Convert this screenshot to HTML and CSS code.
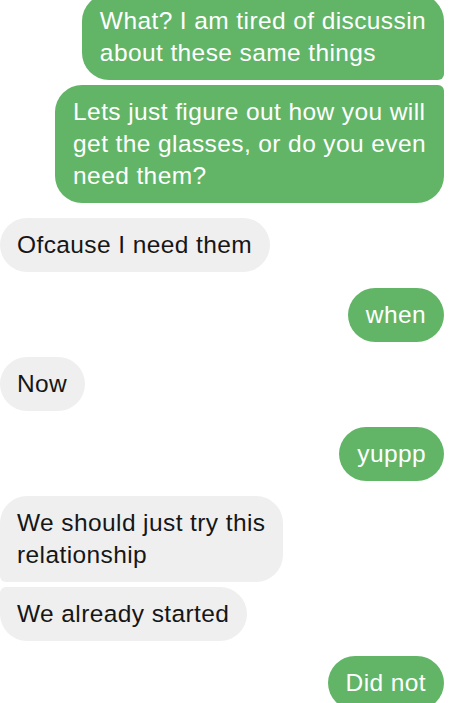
FILE: index.html
```html
<!DOCTYPE html>
<html lang="en">
<head>
  <meta charset="UTF-8" />
  <title>Messages</title>
  <link rel="stylesheet" href="styles.css">
</head>
<body>

  <div class="chat">
    <div class="group sent">
      <div class="bubble first">What? I am tired of discussin<br>about these same things</div>
      <div class="bubble last">Lets just figure out how you will<br>get the glasses, or do you even<br>need them?</div>
    </div>

    <div class="group received">
      <div class="bubble">Ofcause I need them</div>
    </div>

    <div class="group sent">
      <div class="bubble">when</div>
    </div>

    <div class="group received">
      <div class="bubble">Now</div>
    </div>

    <div class="group sent">
      <div class="bubble">yuppp</div>
    </div>

    <div class="group received">
      <div class="bubble first">We should just try this<br>relationship</div>
      <div class="bubble last">We already started</div>
    </div>

    <div class="group sent">
      <div class="bubble">Did not</div>
    </div>
  </div>

</body>
</html>
```

FILE: styles.css
```css
* {
  box-sizing: border-box;
}

body {
  margin: 0;
  background: #fff;
  font-family: 'Liberation Sans', Arial, sans-serif;
  overflow: hidden;
  height: 703px;
}

.chat {
  display: flex;
  flex-direction: column;
  gap: 15.5px;
  margin-top: -6px;
  padding-right: 30px;
}

.group {
  display: flex;
  flex-direction: column;
  gap: 4.5px;
}

.group.sent {
  align-items: flex-end;
}

.group.received {
  align-items: flex-start;
}

.bubble {
  font-size: 24.5px;
  letter-spacing: 0.4px;
  line-height: 32px;
  padding: 11px 18px;
  border-radius: 27px;
  white-space: nowrap;
}

.sent .bubble {
  background: #62b567;
  color: #fff;
}

.received .bubble {
  background: #efefef;
  color: #161616;
  padding-left: 17px;
}

.sent .bubble.first {
  border-bottom-right-radius: 6px;
}

.sent .bubble.last {
  border-top-right-radius: 6px;
}

.received .bubble.first {
  border-bottom-left-radius: 6px;
}

.received .bubble.last {
  border-top-left-radius: 6px;
}
```
